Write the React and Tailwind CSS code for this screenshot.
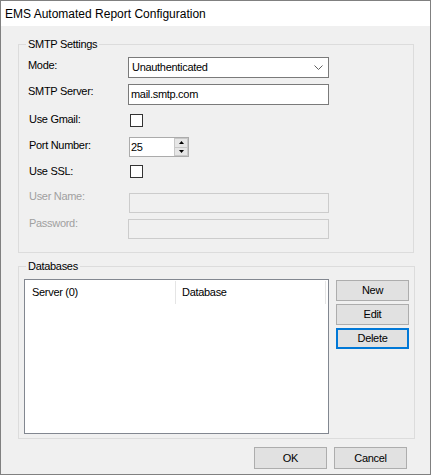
import React from 'react';

const font = { fontFamily: '"Liberation Sans", Arial, sans-serif' };

const Checkbox = () => (
  <div className="w-[13px] h-[13px] ml-[2px] border border-[#333333] bg-white" />
);

const Row = ({ label, disabled, rowClass, labelClass, children }) => (
  <div className={`flex items-start ${rowClass}`}>
    <span
      className={`w-[100px] shrink-0 leading-[14px] ${labelClass} ${
        disabled ? 'text-[#a0a0a0]' : 'text-black'
      }`}
    >
      {label}
    </span>
    {children}
  </div>
);

const GroupBox = ({ title, className, children }) => (
  <div className={`relative border border-[#dcdcdc] ${className}`}>
    <span className="absolute -top-[8px] left-[7px] px-[2px] leading-[14px] bg-[#f0f0f0] text-black">
      {title}
    </span>
    {children}
  </div>
);

const Button = ({ children, focused, className }) => (
  <div
    className={`flex items-center justify-center w-[73px] bg-[#e1e1e1] text-black ${
      focused ? 'border-2 border-[#0078d7]' : 'border border-[#adadad]'
    } ${className}`}
  >
    {children}
  </div>
);

const App = () => {
  return (
    <div
      className="w-[431px] h-[475px] flex flex-col border border-[#808080] bg-[#f0f0f0] overflow-hidden"
      style={font}
    >
      {/* Title bar */}
      <div className="h-[25px] shrink-0 flex items-center pl-[4px] bg-white text-[12px] text-black">
        EMS Automated Report Configuration
      </div>

      <div className="flex flex-col pl-[17px] text-[11px] tracking-[-0.3px]">
        {/* SMTP Settings */}
        <GroupBox title="SMTP Settings" className="mt-[18px] w-[396px] h-[209px]">
          <div className="flex flex-col pl-[9px]">
            <Row label="Mode:" rowClass="mt-[12px]" labelClass="mt-[1px]">
              <div className="flex items-center justify-between w-[201px] h-[21px] pl-[3px] pr-[5px] border border-[#7a7a7a] bg-white">
                <span>Unauthenticated</span>
                <svg width="9" height="5" viewBox="0 0 9 5">
                  <polyline points="0.5,0.5 4.5,4.5 8.5,0.5" fill="none" stroke="#606060" strokeWidth="1" />
                </svg>
              </div>
            </Row>
            <Row label="SMTP Server:" rowClass="mt-[6px]" labelClass="mt-0">
              <div className="flex items-center w-[201px] h-[21px] pl-[2px] border border-[#7a7a7a] bg-white">
                mail.smtp.com
              </div>
            </Row>
            <Row label="Use Gmail:" rowClass="mt-[9px]" labelClass="-mt-[2px] pl-[1px]">
              <Checkbox />
            </Row>
            <Row label="Port Number:" rowClass="mt-[10px]" labelClass="mt-[1px] pl-[1px]">
              <div className="flex w-[60px] h-[20px] ml-[1px] border border-[#ababab] bg-white">
                <span className="flex-1 flex items-center pl-[1px]">25</span>
                <div className="flex flex-col w-[14px]">
                  <div className="flex-1 flex items-center justify-center bg-[#e6e6e6] border border-[#c8c8c8]">
                    <svg width="5" height="3" viewBox="0 0 5 3">
                      <polygon points="2.5,0 5,3 0,3" fill="#000" />
                    </svg>
                  </div>
                  <div className="flex-1 flex items-center justify-center bg-[#e6e6e6] border border-[#c8c8c8] border-t-0">
                    <svg width="5" height="3" viewBox="0 0 5 3">
                      <polygon points="0,0 5,0 2.5,3" fill="#000" />
                    </svg>
                  </div>
                </div>
              </div>
            </Row>
            <Row label="Use SSL:" rowClass="mt-[8px]" labelClass="-mt-[1px] pl-[1px]">
              <Checkbox />
            </Row>
            <Row label="User Name:" disabled rowClass="mt-[15px]" labelClass="-mt-[4px] pl-[1px]">
              <div className="w-[200px] h-[20px] ml-[1px] border border-[#cccccc] bg-[#f0f0f0]" />
            </Row>
            <Row label="Password:" disabled rowClass="mt-[6px]" labelClass="-mt-[3px] pl-[1px]">
              <div className="w-[201px] h-[20px] border border-[#cccccc] bg-[#f0f0f0]" />
            </Row>
          </div>
        </GroupBox>

        {/* Databases */}
        <GroupBox title="Databases" className="mt-[13px] w-[397px] h-[173px]">
          <div className="flex pt-[12px] pl-[5px]">
            <div className="w-[305px] h-[155px] border border-[#828790] bg-white">
              <div className="flex h-[25px] items-center">
                <div className="w-[151px] h-[23px] flex items-center pl-[7px] border-r border-[#e5e5e5]">
                  Server (0)
                </div>
                <div className="w-[150px] h-[23px] flex items-center pl-[6px] border-r border-[#e5e5e5]">
                  Database
                </div>
              </div>
            </div>
            <div className="flex flex-col gap-[3px] ml-[7px] mt-[1px]">
              <Button className="h-[21px]">New</Button>
              <Button className="h-[21px]">Edit</Button>
              <Button focused className="h-[21px]">Delete</Button>
            </div>
          </div>
        </GroupBox>

        {/* Dialog buttons */}
        <div className="flex justify-end gap-[7px] mt-[8px] pr-[23px]">
          <Button className="h-[22px]">OK</Button>
          <Button className="h-[22px]">Cancel</Button>
        </div>
      </div>
    </div>
  );
};

export default App;
